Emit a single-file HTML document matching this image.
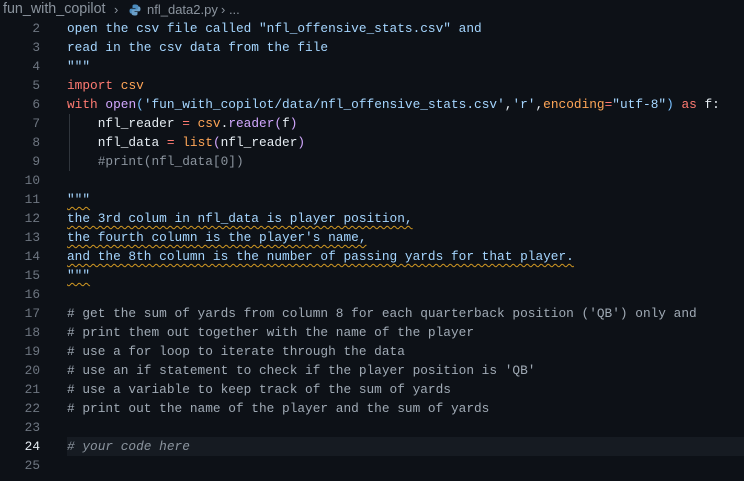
<!DOCTYPE html>
<html><head><meta charset="utf-8"><style>
body{margin:0;width:744px;height:481px;background:#0d1117;overflow:hidden;font-family:"Liberation Mono",monospace;}
.bc{position:absolute;left:0;top:0;width:744px;height:20px;font-family:"Liberation Sans",sans-serif;font-size:13px;color:#8b949e;line-height:19px;}
.bc span{position:absolute;top:0}
.ln{position:absolute;left:0;width:40px;text-align:right;font-size:12.8px;color:#6e7681;height:19px;line-height:19px}
.cd{position:absolute;left:67px;font-size:12.8px;white-space:pre;height:19px;line-height:19px;color:#e6edf3}
.s{color:#a5d6ff}.k{color:#ff7b72}.p{color:#d2a8ff}.o{color:#ffa657}.v{color:#79c0ff}.c{color:#8b949e}.c2{color:#a0aab5}
.w{text-decoration:underline wavy #d29922;text-decoration-thickness:1px;text-underline-offset:3px}
.cur{position:absolute;left:67px;top:437px;width:677px;height:19px;background:#161b22}
.guide{position:absolute;left:69px;width:1px;background:#30363d}
</style></head><body>
<div class="bc"><span style="left:3px;font-size:14.3px">fun_with_copilot</span><span style="left:114px">›</span>
<svg style="position:absolute;left:129px;top:4px" width="12" height="12" viewBox="0 0 12 12"><path d="M6 0.5C3.5 0.5 3.5 1.5 3.5 2.5V4h3v.6H2.2C1 4.6 .5 5.5 .5 7s.6 2.5 1.7 2.5H3V8c0-1 .9-1.8 2-1.8h2.8c.9 0 1.6-.7 1.6-1.6V2.5C9.4 1.2 8.2.5 6 .5z" fill="#4b8bbe"/><path d="M6 11.5c2.5 0 2.5-1 2.5-2V8h-3v-.6h4.3c1.2 0 1.7-.9 1.7-2.4s-.6-2.5-1.7-2.5H9V4c0 1-.9 1.8-2 1.8H4.2c-.9 0-1.6.7-1.6 1.6v2.1C2.6 10.8 3.8 11.5 6 11.5z" fill="#6a9fc9"/></svg>
<span style="left:147px">nfl_data2.py</span><span style="left:221px">› ...</span></div>
<div class="cur"></div>
<div class="guide" style="top:114px;height:57px"></div>
<div class="ln" style="top:19px">2</div><div class="cd s" style="top:19px">open the csv file called "nfl_offensive_stats.csv" and</div>
<div class="ln" style="top:38px">3</div><div class="cd s" style="top:38px">read in the csv data from the file</div>
<div class="ln" style="top:57px">4</div><div class="cd s" style="top:57px">"""</div>
<div class="ln" style="top:76px">5</div><div class="cd" style="top:76px"><span class="k">import</span> <span class="o">csv</span></div>
<div class="ln" style="top:95px">6</div><div class="cd" style="top:95px"><span class="k">with</span> <span class="p">open</span><span class="v">(</span><span class="s">'fun_with_copilot/data/nfl_offensive_stats.csv'</span>,<span class="s">'r'</span>,<span class="o">encoding</span><span class="k">=</span><span class="s">"utf-8"</span><span class="v">)</span> <span class="k">as</span> f:</div>
<div class="ln" style="top:114px">7</div><div class="cd" style="top:114px">    nfl_reader <span class="k">=</span> <span class="o">csv</span>.<span class="p">reader</span><span class="p">(</span>f<span class="p">)</span></div>
<div class="ln" style="top:133px">8</div><div class="cd" style="top:133px">    nfl_data <span class="k">=</span> <span class="o">list</span><span class="p">(</span>nfl_reader<span class="p">)</span></div>
<div class="ln" style="top:152px">9</div><div class="cd c" style="top:152px">    #print(nfl_data[0])</div>
<div class="ln" style="top:171px">10</div>
<div class="ln" style="top:190px">11</div><div class="cd s" style="top:190px"><span class="w">"""</span></div>
<div class="ln" style="top:209px">12</div><div class="cd s" style="top:209px"><span class="w">the 3rd colum in nfl_data is player position,</span></div>
<div class="ln" style="top:228px">13</div><div class="cd s" style="top:228px"><span class="w">the fourth column is the player's name,</span></div>
<div class="ln" style="top:247px">14</div><div class="cd s" style="top:247px"><span class="w">and the 8th column is the number of passing yards for that player.</span></div>
<div class="ln" style="top:266px">15</div><div class="cd s" style="top:266px"><span class="w">"""</span></div>
<div class="ln" style="top:285px">16</div>
<div class="ln" style="top:304px">17</div><div class="cd c2" style="top:304px"># get the sum of yards from column 8 for each quarterback position ('QB') only and</div>
<div class="ln" style="top:323px">18</div><div class="cd c2" style="top:323px"># print them out together with the name of the player</div>
<div class="ln" style="top:342px">19</div><div class="cd c2" style="top:342px"># use a for loop to iterate through the data</div>
<div class="ln" style="top:361px">20</div><div class="cd c2" style="top:361px"># use an if statement to check if the player position is 'QB'</div>
<div class="ln" style="top:380px">21</div><div class="cd c2" style="top:380px"># use a variable to keep track of the sum of yards</div>
<div class="ln" style="top:399px">22</div><div class="cd c2" style="top:399px"># print out the name of the player and the sum of yards</div>
<div class="ln" style="top:418px">23</div>
<div class="ln" style="top:437px;color:#e6edf3">24</div><div class="cd c" style="top:437px;font-style:italic"># your code here</div>
<div class="ln" style="top:456px">25</div>
</body></html>
